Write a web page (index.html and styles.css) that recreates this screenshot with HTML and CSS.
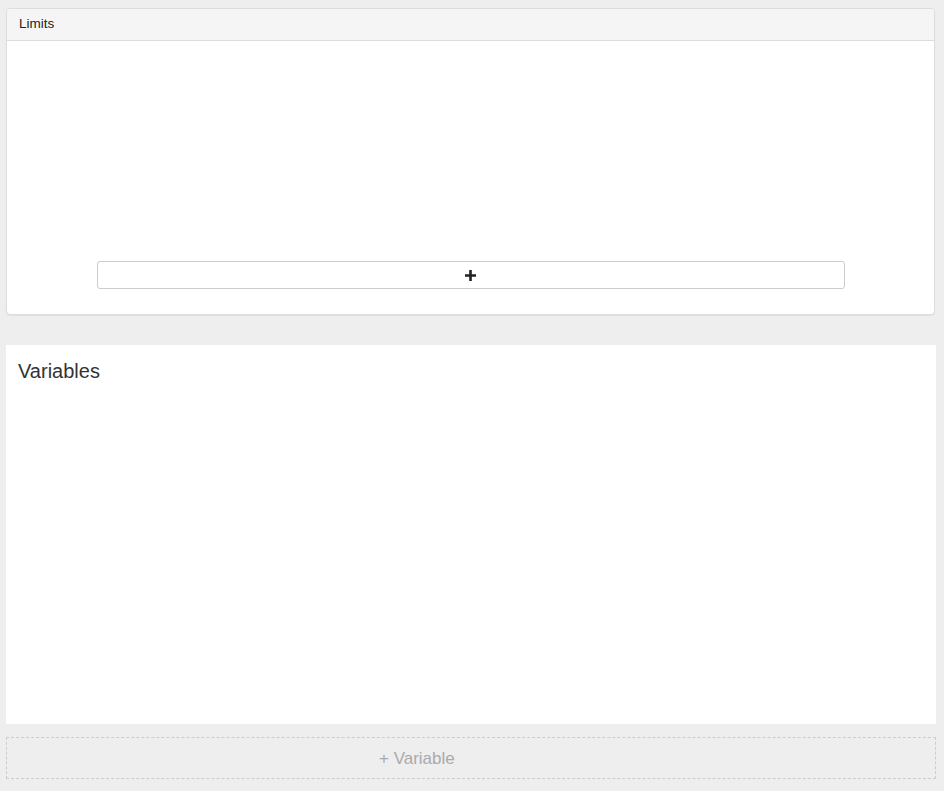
FILE: index.html
```html
<!DOCTYPE html>
<html>
<head>
<meta charset="utf-8">
<link rel="stylesheet" href="styles.css">
</head>
<body>
<div class="page">
  <div class="panel">
    <div class="panel-heading">Limits</div>
    <div class="panel-body">
      <button class="add-btn" type="button">
        <svg width="11" height="11" viewBox="0 0 11 11"><path d="M4.2 0h2.6v4.2H11v2.6H6.8V11H4.2V6.8H0V4.2h4.2z" fill="#222"/></svg>
      </button>
    </div>
  </div>
  <div class="variables">
    <h2 class="var-title">Variables</h2>
  </div>
  <div class="add-var">+ Variable</div>
</div>
</body>
</html>
```
FILE: styles.css
```css
html, body {
  margin: 0;
  padding: 0;
  background: #eeeeee;
  font-family: "Liberation Sans", Arial, sans-serif;
  color: #333;
}
.page {
  padding: 8px 8px 0 6px;
}
.panel {
  background: #fff;
  border: 1px solid #dddddd;
  border-radius: 4px;
  box-shadow: 0 1px 1px rgba(0,0,0,0.06);
  width: 927px;
}
.panel-heading {
  background: #f5f5f5;
  border-bottom: 1px solid #dddddd;
  border-radius: 3px 3px 0 0;
  height: 31px;
  line-height: 30px;
  padding-left: 12px;
  font-size: 13.5px;
  color: #222;
}
.panel-body {
  height: 273px;
  display: flex;
  align-items: flex-end;
  justify-content: center;
}
.add-btn {
  width: 748px;
  height: 28px;
  margin-bottom: 25px;
  background: #fff;
  border: 1px solid #cccccc;
  border-radius: 3px;
  display: flex;
  align-items: center;
  justify-content: center;
  padding: 0;
}
.variables {
  margin-top: 30px;
  background: #fff;
  width: 930px;
  height: 379px;
  padding: 15px 12px 0;
  box-sizing: border-box;
}
.var-title {
  margin: 0;
  font-weight: normal;
  font-size: 20px;
  line-height: 22px;
  color: #333;
}
.add-var {
  margin-top: 13px;
  width: 930px;
  height: 42px;
  box-sizing: border-box;
  border: 1px dashed #cccccc;
  color: #aaaaaa;
  font-size: 17px;
  line-height: 41px;
  padding-left: 372px;
}
```
